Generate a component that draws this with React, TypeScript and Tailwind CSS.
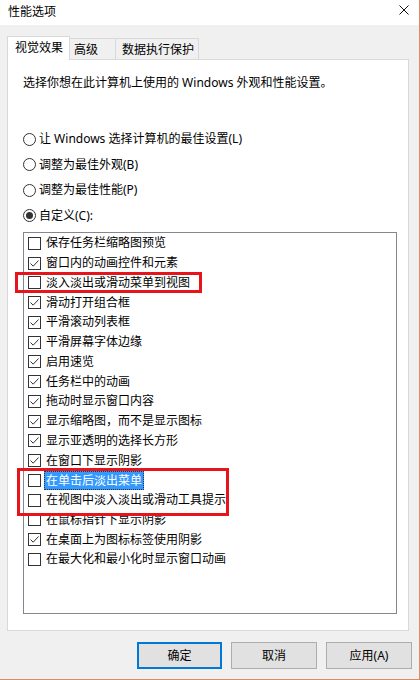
import React from 'react'

const items: { label: string; checked: boolean; selected?: boolean }[] = [
  { label: '保存任务栏缩略图预览', checked: false },
  { label: '窗口内的动画控件和元素', checked: true },
  { label: '淡入淡出或滑动菜单到视图', checked: false },
  { label: '滑动打开组合框', checked: true },
  { label: '平滑滚动列表框', checked: true },
  { label: '平滑屏幕字体边缘', checked: true },
  { label: '启用速览', checked: true },
  { label: '任务栏中的动画', checked: true },
  { label: '拖动时显示窗口内容', checked: true },
  { label: '显示缩略图，而不是显示图标', checked: true },
  { label: '显示亚透明的选择长方形', checked: true },
  { label: '在窗口下显示阴影', checked: true },
  { label: '在单击后淡出菜单', checked: false, selected: true },
  { label: '在视图中淡入淡出或滑动工具提示', checked: false },
  { label: '在鼠标指针下显示阴影', checked: false },
  { label: '在桌面上为图标标签使用阴影', checked: true },
  { label: '在最大化和最小化时显示窗口动画', checked: false },
]

const radios = [
  { label: '让 Windows 选择计算机的最佳设置(L)', on: false },
  { label: '调整为最佳外观(B)', on: false },
  { label: '调整为最佳性能(P)', on: false },
  { label: '自定义(C):', on: true },
]

function Checkbox({ checked }: { checked: boolean }) {
  return (
    <div className="w-[13px] h-[13px] border border-[#333333] bg-white flex items-center justify-center shrink-0">
      {checked && (
        <svg width="11" height="11" viewBox="0 0 11 11">
          <path d="M1.5 5.5 L4.2 8.2 L9.5 2.5" fill="none" stroke="#333333" strokeWidth="1" />
        </svg>
      )}
    </div>
  )
}

function Radio({ on }: { on: boolean }) {
  return (
    <div className="w-[13px] h-[13px] rounded-full border border-[#333333] bg-white flex items-center justify-center shrink-0">
      {on && <div className="w-[7px] h-[7px] rounded-full bg-[#333333]" />}
    </div>
  )
}

export default function App() {
  return (
    <div
      className="relative w-[420px] h-[680px] bg-[#f0f0f0] border-r border-b border-[#e08a5e] text-[12px] text-black overflow-hidden"
      style={{ fontFamily: '"Noto Sans", "Noto Sans CJK SC", sans-serif' }}
    >
      {/* title bar */}
      <div className="h-[25px] bg-white flex items-center justify-between pl-[8px] pr-[10px]">
        <span className="leading-none -mt-[2px]">性能选项</span>
        <svg width="10" height="10" viewBox="0 0 10 10" className="-mt-[5px]">
          <path d="M0.5 0.5 L9.5 9.5 M9.5 0.5 L0.5 9.5" stroke="#111" strokeWidth="1" />
        </svg>
      </div>

      {/* tabs */}
      <div className="relative z-10 flex items-end h-[24px] ml-[7px] mt-[11px]">
        <div className="w-[63px] h-[24px] bg-white border border-b-0 border-[#d9d9d9] pl-[7px] pt-[2px] leading-[18px]">
          视觉效果
        </div>
        <div className="w-[46px] h-[21px] mb-px border border-l-0 border-b-0 border-[#d9d9d9] pl-[4px] pt-[2px] leading-[18px]">
          高级
        </div>
        <div className="w-[83px] h-[21px] mb-px border border-l-0 border-b-0 border-[#d9d9d9] pl-[6px] pt-[2px] leading-[18px]">
          数据执行保护
        </div>
      </div>

      {/* panel */}
      <div className="-mt-px ml-[7px] w-[402px] h-[572px] bg-white border border-[#d9d9d9] pt-[14px] pl-[15px]">
        <p className="leading-[18px]">选择你想在此计算机上使用的 Windows 外观和性能设置。</p>

        <div className="mt-[37px] flex flex-col gap-[5.67px]">
          {radios.map((r) => (
            <div key={r.label} className="h-[20px] flex items-center gap-[3px]">
              <Radio on={r.on} />
              <span className="leading-[18px]">{r.label}</span>
            </div>
          ))}
        </div>

        <div className="mt-[6px] w-[374px] h-[382px] border border-[#828790] bg-white pt-[0.5px]">
          {items.map((it) => (
            <div key={it.label} className="h-[19.75px] flex items-center pl-[4px] gap-[3px]">
              <Checkbox checked={it.checked} />
              <span
                className={
                  it.selected
                    ? 'px-[2px] h-[19px] leading-[19px] bg-[#3399ff] text-white outline-1 outline-dotted outline-[#333333] -outline-offset-1'
                    : 'px-[2px] leading-[18px]'
                }
              >
                {it.label}
              </span>
            </div>
          ))}
        </div>
      </div>

      {/* buttons */}
      <div className="flex justify-end gap-[9px] pr-[7px] mt-[11px]">
        <button className="w-[85px] h-[27px] bg-[#e1e1e1] border-2 border-[#0078d7] leading-none">确定</button>
        <button className="w-[86px] h-[27px] bg-[#e1e1e1] border border-[#adadad] leading-none">取消</button>
        <button className="w-[86px] h-[27px] bg-[#e1e1e1] border border-[#adadad] leading-none">应用(A)</button>
      </div>

      {/* red annotation boxes */}
      <div className="absolute left-[15px] top-[272px] w-[187px] h-[21px] border-[3px] border-[#e8141c]" />
      <div className="absolute left-[17px] top-[468px] w-[212px] h-[48px] border-[3px] border-[#e8141c]" />
    </div>
  )
}
